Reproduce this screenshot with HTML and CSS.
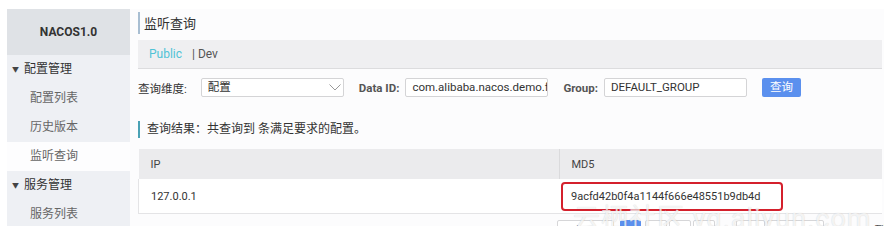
FILE: index.html
```html
<!DOCTYPE html>
<html lang="zh">
	<head>
		<meta charset="UTF-8" />
		<title>监听查询</title>
		<link rel="stylesheet" href="styles.css">
	</head>
	<body>
		<div class="app">
			<div class="sidebar">
				<div class="logo">NACOS1.0</div>
				<div class="group"><span class="arrow">▼</span>配置管理</div>
				<div class="item">配置列表</div>
				<div class="item">历史版本</div>
				<div class="item current">监听查询</div>
				<div class="group"><span class="arrow">▼</span>服务管理</div>
				<div class="item">服务列表</div>
			</div>
			<div class="main">
				<div class="page-title">监听查询</div>
				<div class="tabs">
					<span class="tab active">Public</span>
					<span class="tab">| Dev</span>
				</div>
				<div class="form">
					<span class="label">查询维度:</span>
					<div class="select">
						<span>配置</span>
						<svg width="12" height="7" viewBox="0 0 12 7"><path d="M0.5 0.5 L6 6 L11.5 0.5" fill="none" stroke="#999" stroke-width="1" /></svg>
					</div>
					<span class="label bold">Data ID:</span>
					<div class="input">com.alibaba.nacos.demo.flow</div>
					<span class="label bold">Group:</span>
					<div class="input">DEFAULT_GROUP</div>
					<div class="btn">查询</div>
				</div>
				<div class="result">查询结果：共查询到 条满足要求的配置。</div>
				<table class="grid">
					<tr>
						<th class="col-ip">IP</th>
						<th>MD5</th>
					</tr>
					<tr>
						<td>127.0.0.1</td>
						<td><span class="mark">9acfd42b0f4a1144f666e48551b9db4d</span></td>
					</tr>
				</table>
				<div class="pager">
					<span class="pg wide">&lt; 上一页</span>
					<span class="pg on">1</span>
					<span class="pg">2</span>
					<span class="pg">3</span>
					<span class="pg">4</span>
					<span class="dots">...</span>
					<span class="pg ten">10</span>
					<span class="pg wide">下一页 &gt;</span>
					<span class="count"><b>1</b>/10</span>
					<span class="goto">到</span>
				</div>
				<div class="watermark">云栖社区 yq.aliyun.com</div>
			</div>
		</div>
	</body>
</html>
```

FILE: styles.css
```css
body {
	margin: 0;
	background-color: #ffffff;
	font-family: Roboto, "Noto Sans CJK SC", sans-serif;
	color: #333;
}

.app {
	display: flex;
	margin: 9px 10px 0 7px;
	height: 217px;
	overflow: hidden;
	background-color: #fcfcfd;
}

.sidebar {
	width: 123px;
	flex-shrink: 0;
	background-color: #eef0f4;
	font-size: 12px;
}

.logo {
	height: 46px;
	line-height: 46px;
	text-align: center;
	font-weight: bold;
	font-size: 12px;
	color: #333;
	background-color: #dfe2e6;
}

.group,
.item {
	height: 29px;
	line-height: 29px;
}

.group {
	padding-left: 5px;
	color: #333;
}

.arrow {
	display: inline-block;
	font-size: 7px;
	width: 12px;
	vertical-align: 1px;
	color: #444;
}

.item {
	padding-left: 23px;
	color: #666;
}

.item.current {
	background-color: #fdfdfe;
}

.main {
	flex: 1;
	position: relative;
	padding: 3px 2px 0 8px;
	min-width: 0;
}

.page-title {
	border-left: 2px solid #a8bed2;
	padding-left: 4px;
	height: 22px;
	line-height: 23px;
	font-size: 13px;
	color: #333;
}

.tabs {
	margin-top: 6px;
	height: 28px;
	line-height: 28px;
	background-color: #efeff1;
	border-bottom: 1px solid #dcdcde;
	padding-left: 11px;
	font-size: 12px;
}

.tab {
	color: #555;
}

.tab.active {
	color: #4fc3d6;
	margin-right: 7px;
}

.form {
	display: flex;
	align-items: center;
	margin-top: 9px;
	height: 19px;
	font-size: 11.5px;
}

.label {
	color: #333;
}

.label.bold {
	font-weight: bold;
	color: #555;
	margin-left: 15px;
}

.select,
.input {
	box-sizing: border-box;
	height: 19px;
	width: 143px;
	border: 1px solid #d4d4d6;
	border-radius: 2px;
	background-color: #fff;
	line-height: 17px;
	padding-left: 6px;
	overflow: hidden;
	white-space: nowrap;
	color: #333;
	flex-shrink: 0;
}

.select {
	display: flex;
	align-items: center;
	justify-content: space-between;
	padding-right: 2px;
	margin-left: 14px;
}

.input {
	margin-left: 6px;
	padding-right: 4px;
	font-size: 11.5px;
}

.btn {
	margin-left: 15px;
	width: 39px;
	height: 19px;
	line-height: 19px;
	text-align: center;
	color: #fff;
	background-color: #5b90ee;
	border-radius: 2px;
	font-size: 11.5px;
	flex-shrink: 0;
}

.result {
	margin-top: 24px;
	border-left: 2px solid #4aa2b5;
	padding-left: 7px;
	height: 17px;
	line-height: 17px;
	font-size: 12px;
	color: #333;
}

.grid {
	margin-top: 11px;
	width: 100%;
	border-collapse: collapse;
	font-size: 11px;
	color: #333;
}

.grid th {
	height: 30px;
	background-color: #ebebed;
	text-align: left;
	font-weight: normal;
	padding: 0 12px;
	color: #444;
}

.grid .col-ip {
	width: 396px;
	border-right: 1px solid #dadadc;
}

.grid td {
	height: 31px;
	background-color: #fff;
	border-bottom: 1px solid #e4e4e6;
	padding: 0 12px;
}

.grid td:first-child {
	border-left: 1px solid #e4e4e6;
}

.grid td:last-child {
	padding: 3px 0 0 2px;
	vertical-align: top;
}

.mark {
	display: inline-block;
	width: 210px;
	height: 25px;
	line-height: 25px;
	padding-left: 8px;
	border: 2px solid #d4202c;
	border-radius: 4px;
}

.pager {
	display: flex;
	align-items: flex-start;
	margin-top: 6px;
	margin-left: 419px;
	font-size: 12px;
	color: #555;
	white-space: nowrap;
}

.pager span {
	flex-shrink: 0;
}

.pg {
	box-sizing: border-box;
	width: 22px;
	height: 24px;
	line-height: 22px;
	margin-right: 2px;
	text-align: center;
	border: 1px solid #d6d6d8;
	border-radius: 2px;
	background-color: #fff;
}

.pg.wide {
	width: 57px;
}

.pg.on {
	background-color: #5b90ee;
	border-color: #5b90ee;
	color: #fff;
	margin-left: 4px;
	width: 21px;
	margin-right: 4px;
}

.pg.ten {
	width: 29px;
}

.dots {
	width: 19px;
	line-height: 22px;
	text-align: center;
}

.count {
	margin-left: 11px;
	line-height: 22px;
}

.count b {
	font-weight: normal;
	color: #5b90ee;
}

.goto {
	margin-left: 12px;
	line-height: 22px;
}

.watermark {
	position: absolute;
	left: 443px;
	top: 188px;
	font-size: 27px;
	color: rgba(255, 255, 255, 0.75);
	text-shadow: 0 0 1px rgba(0, 0, 0, 0.18);
	white-space: nowrap;
	letter-spacing: 1px;
}
```
